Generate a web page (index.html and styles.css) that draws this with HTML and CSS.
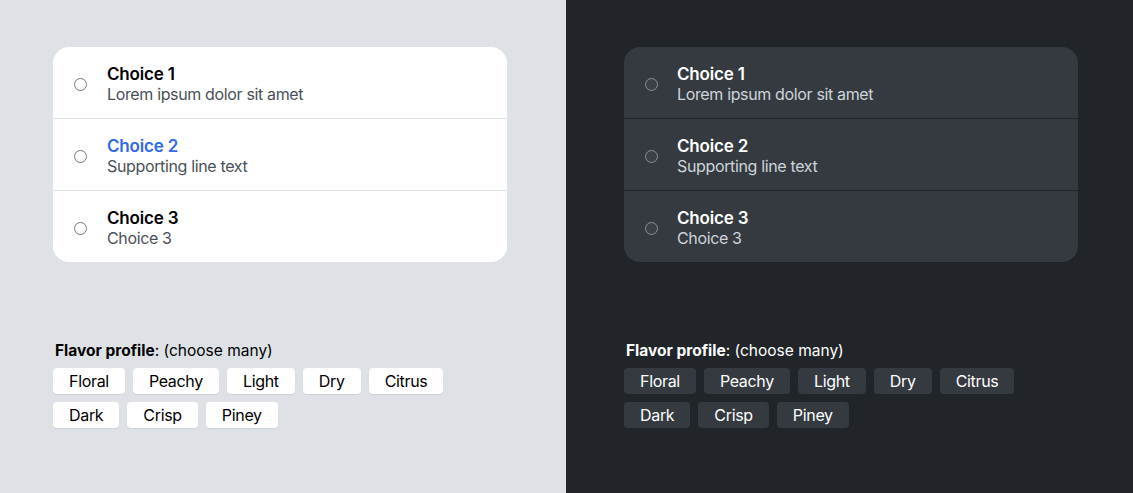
FILE: index.html
```html
<!DOCTYPE html>
<html>
<head>
<meta charset="utf-8">
<link rel="stylesheet" href="styles.css">
</head>
<body>
<div class="split">
  <section class="panel light">
    <div class="card">
      <label class="row"><span class="radio"></span><span class="txt"><span class="title">Choice 1</span><span class="sub">Lorem ipsum dolor sit amet</span></span></label>
      <label class="row"><span class="radio"></span><span class="txt"><span class="title active">Choice 2</span><span class="sub">Supporting line text</span></span></label>
      <label class="row"><span class="radio"></span><span class="txt"><span class="title">Choice 3</span><span class="sub">Choice 3</span></span></label>
    </div>
    <div class="flavor">
      <div class="label"><b>Flavor profile</b>: (choose many)</div>
      <div class="chips">
        <span class="chip">Floral</span><span class="chip">Peachy</span><span class="chip">Light</span><span class="chip">Dry</span><span class="chip">Citrus</span><span class="chip">Dark</span><span class="chip">Crisp</span><span class="chip">Piney</span>
      </div>
    </div>
  </section>
  <section class="panel dark">
    <div class="card">
      <label class="row"><span class="radio"></span><span class="txt"><span class="title">Choice 1</span><span class="sub">Lorem ipsum dolor sit amet</span></span></label>
      <label class="row"><span class="radio"></span><span class="txt"><span class="title">Choice 2</span><span class="sub">Supporting line text</span></span></label>
      <label class="row"><span class="radio"></span><span class="txt"><span class="title">Choice 3</span><span class="sub">Choice 3</span></span></label>
    </div>
    <div class="flavor">
      <div class="label"><b>Flavor profile</b>: (choose many)</div>
      <div class="chips">
        <span class="chip">Floral</span><span class="chip">Peachy</span><span class="chip">Light</span><span class="chip">Dry</span><span class="chip">Citrus</span><span class="chip">Dark</span><span class="chip">Crisp</span><span class="chip">Piney</span>
      </div>
    </div>
  </section>
</div>
</body>
</html>
```
FILE: styles.css
```css
html, body { margin: 0; padding: 0; }
body { font-family: Inter, "Liberation Sans", sans-serif; font-size: 16px; }
.split { display: grid; grid-template-columns: 566px 567px; height: 493px; }
.panel { padding-top: 47px; box-sizing: border-box; }
.light { background: #dee2e6; padding-left: 53px; color: #000; }
.dark { background: #212529; padding-left: 58px; color: #fff; }
.card { width: 454px; border-radius: 16px; overflow: hidden; display: flex; flex-direction: column; }
.light .card { background: #fff; }
.dark .card { background: #343a40; }
.row { height: 71px; display: flex; align-items: center; padding-left: 21px; gap: 20px; }
.dark .row { gap: 19px; }
.light .row + .row { border-top: 1px solid #dee2e6; }
.dark .row + .row { border-top: 1px solid #212529; }
.radio { width: 13px; height: 13px; border-radius: 50%; box-sizing: border-box; flex: none; margin-top: 4px; }
.light .radio { border: 1px solid #767676; background: #fff; }
.dark .radio { border: 1px solid #8e8e8e; background: #3b4046; }
.txt { display: flex; flex-direction: column; line-height: 20px; margin-top: 2px; }
.title { font-size: 17px; font-weight: 600; letter-spacing: -0.01em; }
.title.active { color: #3269e6; }
.sub { font-size: 16px; letter-spacing: -0.022em; }
.light .sub { color: #495057; }
.dark .sub { color: #ced4da; }
.flavor { margin-top: 79px; }
.label { font-size: 15.5px; line-height: 20px; padding-left: 2px; margin-bottom: 7px; }
.label b { font-weight: 700; }
.chips { display: flex; flex-wrap: wrap; gap: 8px; width: 400px; }
.chip { height: 26px; line-height: 26px; padding: 0 16px; border-radius: 4px; font-size: 16px; letter-spacing: -0.02em; }
.light .chip { background: #fff; box-shadow: 0 1px 1px rgba(0,0,0,0.08); }
.dark .chip { background: #343a40; }
```
